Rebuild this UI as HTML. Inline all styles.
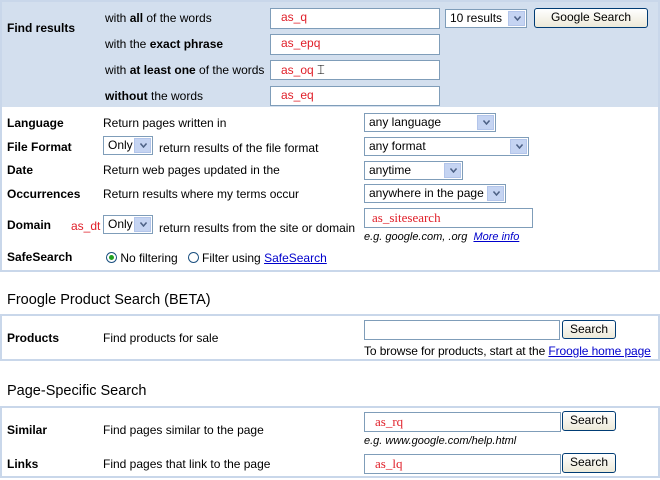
<!DOCTYPE html>
<html><head><meta charset="utf-8"><style>
*{margin:0;padding:0;box-sizing:border-box}
body{width:660px;height:480px;background:#fff;font-family:"Liberation Sans",Arial,sans-serif;font-size:12px;color:#000;position:relative;overflow:hidden}
.a{position:absolute;white-space:nowrap;line-height:14px}
.b{font-weight:bold}
.box{position:absolute;border:2px solid #c9d7ea}
.in{position:absolute;border:1px solid #7f9db9;background:#fff;color:#e0202a;padding-left:10px;font-size:12px;line-height:17px}
.sel{position:absolute;border:1px solid #7f9db9;background:#fff;padding-left:4px;font-size:12px;line-height:16px}
.sel:after{content:"";position:absolute;right:1px;top:1px;bottom:1px;width:15px;background:#c5d4f2;border:1px solid #b3c5ea}
.sel svg{position:absolute;right:5px;top:50%;margin-top:-3px;z-index:2}
.btn{position:absolute;border:1px solid #003c74;border-radius:3px;background:linear-gradient(#fff,#ece9d8);text-align:center;font-size:12px;line-height:17px}
.r{color:#e0202a}
a{color:#0000cc;text-decoration:underline}
.h{position:absolute;font-size:14.5px;left:7px}
</style></head><body>
<div class="box" style="left:0;top:0;width:660px;height:272px"></div>
<div style="position:absolute;left:2px;top:2px;width:656px;height:105px;background:#d3dfee"></div>
<div class="a b" style="left:7px;top:21px">Find results</div>
<div class="a" style="left:105px;top:11px">with <b>all</b> of the words</div>
<div class="a" style="left:105px;top:37px">with the <b>exact phrase</b></div>
<div class="a" style="left:105px;top:63px">with <b>at least one</b> of the words</div>
<div class="a" style="left:105px;top:89px"><b>without</b> the words</div>
<div class="in" style="left:270px;top:8px;width:170px;height:21px">as_q</div>
<div class="in" style="left:270px;top:34px;width:170px;height:21px">as_epq</div>
<div class="in" style="left:270px;top:60px;width:170px;height:20px">as_oq <span style="color:#000;font-size:13px">&#x2336;</span></div>
<div class="in" style="left:270px;top:86px;width:170px;height:20px">as_eq</div>
<div class="sel" style="left:445px;top:9px;width:82px;height:19px">10 results<svg width="7" height="5"><path d="M0.5 0.5L3.5 4L6.5 0.5" fill="none" stroke="#4d6185" stroke-width="1.5"/></svg></div>
<div class="btn" style="left:534px;top:8px;width:114px;height:20px">Google Search</div>

<div class="a b" style="left:7px;top:116px">Language</div>
<div class="a" style="left:103px;top:116px">Return pages written in</div>
<div class="sel" style="left:364px;top:113px;width:132px;height:19px">any language<svg width="7" height="5"><path d="M0.5 0.5L3.5 4L6.5 0.5" fill="none" stroke="#4d6185" stroke-width="1.5"/></svg></div>
<div class="a b" style="left:7px;top:140px">File Format</div>
<div class="sel" style="left:103px;top:136px;width:50px;height:19px">Only<svg width="7" height="5"><path d="M0.5 0.5L3.5 4L6.5 0.5" fill="none" stroke="#4d6185" stroke-width="1.5"/></svg></div>
<div class="a" style="left:159px;top:141px">return results of the file format</div>
<div class="sel" style="left:364px;top:137px;width:165px;height:19px">any format<svg width="7" height="5"><path d="M0.5 0.5L3.5 4L6.5 0.5" fill="none" stroke="#4d6185" stroke-width="1.5"/></svg></div>
<div class="a b" style="left:7px;top:163px">Date</div>
<div class="a" style="left:103px;top:163px">Return web pages updated in the</div>
<div class="sel" style="left:364px;top:161px;width:99px;height:19px">anytime<svg width="7" height="5"><path d="M0.5 0.5L3.5 4L6.5 0.5" fill="none" stroke="#4d6185" stroke-width="1.5"/></svg></div>
<div class="a b" style="left:7px;top:187px">Occurrences</div>
<div class="a" style="left:103px;top:187px">Return results where my terms occur</div>
<div class="sel" style="left:364px;top:184px;width:142px;height:19px">anywhere in the page<svg width="7" height="5"><path d="M0.5 0.5L3.5 4L6.5 0.5" fill="none" stroke="#4d6185" stroke-width="1.5"/></svg></div>
<div class="a b" style="left:7px;top:218px">Domain</div>
<div class="a r" style="left:71px;top:219px">as_dt</div>
<div class="sel" style="left:103px;top:215px;width:50px;height:19px">Only<svg width="7" height="5"><path d="M0.5 0.5L3.5 4L6.5 0.5" fill="none" stroke="#4d6185" stroke-width="1.5"/></svg></div>
<div class="a" style="left:159px;top:221px">return results from the site or domain</div>
<div class="in" style="left:364px;top:208px;width:169px;height:20px;font-family:'Liberation Serif',serif;font-size:13px;padding-left:7px">as_sitesearch</div>
<div class="a" style="left:364px;top:230px;font-style:italic;font-size:11px">e.g. google.com, .org &nbsp;<a>More info</a></div>
<div class="a b" style="left:7px;top:250px">SafeSearch</div>
<div class="a" style="left:106px;top:251px"><span style="display:inline-block;width:11px;height:11px;border:1px solid #1c5180;border-radius:50%;vertical-align:-1px;position:relative;background:#fff"><span style="position:absolute;left:2px;top:2px;width:5px;height:5px;border-radius:50%;background:#21a121"></span></span> No filtering &nbsp; <span style="display:inline-block;width:11px;height:11px;border:1px solid #1c5180;border-radius:50%;vertical-align:-1px;background:#fff"></span> Filter using <a>SafeSearch</a></div>

<div class="h" style="top:292px">Froogle Product Search (BETA)</div>
<div class="box" style="left:0;top:314px;width:660px;height:47px"></div>
<div class="a b" style="left:7px;top:331px">Products</div>
<div class="a" style="left:103px;top:331px">Find products for sale</div>
<div class="in" style="left:364px;top:320px;width:196px;height:20px"></div>
<div class="btn" style="left:562px;top:320px;width:54px;height:19px">Search</div>
<div class="a" style="left:364px;top:344px;letter-spacing:-0.1px">To browse for products, start at the <a>Froogle home page</a></div>

<div class="h" style="top:383px">Page-Specific Search</div>
<div class="box" style="left:0;top:406px;width:660px;height:72px"></div>
<div class="a b" style="left:7px;top:423px">Similar</div>
<div class="a" style="left:103px;top:423px">Find pages similar to the page</div>
<div class="in" style="left:364px;top:412px;width:197px;height:20px;font-family:'Liberation Serif',serif;font-size:13px">as_rq</div>
<div class="btn" style="left:562px;top:411px;width:54px;height:20px">Search</div>
<div class="a" style="left:364px;top:434px;font-style:italic;font-size:11px">e.g. www.google.com/help.html</div>
<div class="a b" style="left:7px;top:457px">Links</div>
<div class="a" style="left:103px;top:457px">Find pages that link to the page</div>
<div class="in" style="left:364px;top:454px;width:197px;height:20px;font-family:'Liberation Serif',serif;font-size:13px">as_lq</div>
<div class="btn" style="left:562px;top:453px;width:54px;height:20px">Search</div>
</body></html>
